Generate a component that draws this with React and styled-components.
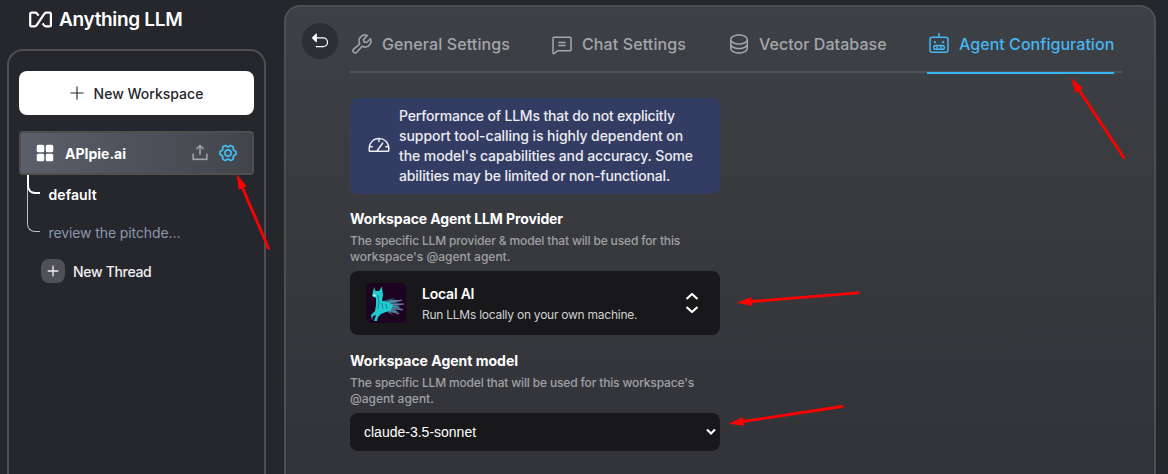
import React from "react";
import styled, { createGlobalStyle } from "styled-components";
import {
  PiSquaresFourFill, PiUploadSimple, PiGearSix, PiWrench, PiChatText,
  PiDatabase, PiRobot, PiArrowUUpLeftFill, PiGauge, PiPlus, PiPlusBold,
} from "react-icons/pi";

const Global = createGlobalStyle`
  * { box-sizing: border-box; }
  html, body { margin: 0; height: 474px; overflow: hidden; background: #25272c; }
  body { font-family: Inter, "Open Sans", sans-serif; color: #fff; }
  svg { display: block; flex: none; }
`;

const Page = styled.div`
  position: relative;
  display: flex;
  width: 1168px;
  height: 474px;
  overflow: hidden;
`;

const Sidebar = styled.aside`
  display: flex;
  flex-direction: column;
  width: 284px;
  padding: 0 18px 0 7px;
`;

const Brand = styled.div`
  display: flex;
  align-items: center;
  gap: 6px;
  flex: none;
  height: 49px;
  padding: 0 0 10px 21px;
  font-size: 19px;
  font-weight: 600;
  white-space: nowrap;
`;

const SidebarPanel = styled.nav`
  height: 500px;
  flex: none;
  padding: 20px 10px;
  border: 2px solid #4f4f50;
  border-radius: 16px;
`;

const NewWorkspace = styled.button`
  display: flex;
  align-items: center;
  justify-content: center;
  gap: 8px;
  width: 235px;
  height: 44px;
  padding: 0 8px 0 6px;
  border: 0;
  border-radius: 8px;
  background: #fff;
  color: #25272c;
  font: 500 14px Inter, sans-serif;
`;

const WorkspaceRow = styled.div`
  display: flex;
  align-items: center;
  width: 235px;
  height: 44px;
  margin-top: 16px;
  padding: 0 14px 0 12px;
  border: 2px solid #4f4f50;
  border-radius: 4px;
  background: linear-gradient(90deg, #5a5f69, #41454b);
  color: #fff;
`;

const WorkspaceName = styled.span`
  flex: 1;
  margin-left: 8px;
  font-size: 14px;
  font-weight: 700;
`;

const RowAction = styled.span`
  margin-left: 8px;
  color: ${(p) => (p.$active ? "#46c8ff" : "#a2a4a7")};

  svg {
    stroke: currentColor;
    stroke-width: 5;
  }
`;

const Threads = styled.div`
  position: relative;
  padding-left: 8px;
`;

const Thread = styled.div`
  display: flex;
  align-items: center;
  height: 38px;
  padding: 0 0 0 21.5px;
  font-size: 14px;
  font-weight: ${(p) => (p.$active ? 600 : 400)};
  color: ${(p) => (p.$active ? "#fff" : "#8b97ac")};
`;

const Branch = styled.i`
  position: absolute;
  left: 8px;
  top: 0;
  width: 13px;
  height: ${(p) => p.$length}px;
  border: solid ${(p) => (p.$active ? "#fff" : "#b9c2d0")};
  border-width: 0 0 ${(p) => (p.$active ? "2px 2px" : "1px 1px")};
  border-bottom-left-radius: 8px;
`;

const NewThread = styled.div`
  display: flex;
  align-items: center;
  gap: 8px;
  height: 40px;
  padding-left: 14px;
  font-size: 14px;
  font-weight: 500;
  color: #f0f0f1;
`;

const PlusTile = styled.span`
  display: grid;
  place-items: center;
  width: 24px;
  height: 24px;
  border-radius: 8px;
  background: #505158;
`;

const Text = styled.span`
  white-space: nowrap;
  letter-spacing: ${(p) => p.$track || 0}px;
`;

const Main = styled.main`
  display: flex;
  align-items: flex-start;
  width: 872px;
  height: 800px;
  flex: none;
  margin-top: 5px;
  padding: 16px 16px;
  border: 2px solid #4f4f50;
  border-radius: 16px;
  background: linear-gradient(180deg, #3d4147 0, #3a3c40 130px, #323338 470px);
`;

const Back = styled.button`
  display: grid;
  place-items: center;
  width: 36px;
  height: 36px;
  margin-right: 12px;
  padding: 0;
  border: 0;
  border-radius: 50%;
  background: #2b2e34;
  color: #fff;
`;

const Content = styled.div`
  width: 772px;
`;

const Tabs = styled.div`
  display: flex;
  gap: 40px;
  height: 50px;
  border-bottom: 2px solid #505257;
`;

const Tab = styled.div`
  display: flex;
  align-items: center;
  gap: 8px;
  flex: none;
  width: ${(p) => p.$width}px;
  height: 51px;
  padding-bottom: 9px;
  font-size: 16px;
  font-weight: 500;
  color: ${(p) => (p.$active ? "#46b6f0" : "#a5a6a9")};
  box-shadow: ${(p) => (p.$active ? "inset 0 -2px #36b5f0" : "none")};
`;

const Form = styled.div`
  display: flex;
  flex-direction: column;
  width: 370px;
  padding-top: 25px;
`;

const Notice = styled.div`
  display: flex;
  align-items: center;
  gap: 8px;
  height: 96px;
  margin-bottom: 15px;
  padding-left: 17px;
  border-radius: 8px;
  background: #333d63;
  color: #ececf2;
`;

const Lines = styled.p`
  display: flex;
  flex-direction: column;
  margin: 0;
  font-size: ${(p) => p.$size}px;
  line-height: ${(p) => p.$line}px;
  font-weight: 500;
`;

const FieldTitle = styled.h3`
  margin: 0 0 4px;
  font-size: 14px;
  line-height: 20px;
  font-weight: 700;
`;

const Hint = styled.div`
  margin-bottom: 6px;
  color: #a0a1a4;
`;

const Provider = styled.div`
  display: flex;
  align-items: center;
  height: 64px;
  margin-bottom: 16px;
  padding: 0 21px 0 16px;
  border-radius: 8px;
  background: #18181a;
`;

const ProviderText = styled.div`
  flex: 1;
  margin-left: 16px;
  padding-top: 2px;
`;

const ProviderName = styled.div`
  font-size: 14px;
  line-height: 20px;
  font-weight: 600;
`;

const ProviderNote = styled.div`
  margin-top: 2px;
  font-size: 12px;
  line-height: 18px;
  color: #d0d0d2;
`;

const ModelSelect = styled.div`
  display: flex;
  align-items: center;
  justify-content: space-between;
  height: 38px;
  padding: 0 4px 0 14px;
  border-radius: 8px;
  background: #18181a;
  font: 14px "Liberation Sans", Arial, sans-serif;
`;

const Overlay = styled.svg`
  position: absolute;
  left: 0;
  top: 0;
  pointer-events: none;
`;

function Arrow({ tip, tail }) {
  const dx = tail[0] - tip[0];
  const dy = tail[1] - tip[1];
  const len = Math.hypot(dx, dy);
  const ux = dx / len;
  const uy = dy / len;
  const bx = tip[0] + ux * 15;
  const by = tip[1] + uy * 15;
  return (
    <g>
      <line x1={bx} y1={by} x2={tail[0]} y2={tail[1]} stroke="#f00" strokeWidth="2.8" strokeLinecap="round" />
      <polygon
        fill="#f00"
        points={`${tip[0]},${tip[1]} ${bx - uy * 4.4},${by + ux * 4.4} ${bx + uy * 4.4},${by - ux * 4.4}`}
      />
    </g>
  );
}

const LogoMark = () => (
  <svg width="25" height="18" viewBox="0 0 25 18" fill="none" stroke="#fff" strokeWidth="2.200" strokeLinejoin="round">
    <path d="M10.600 4.700 9 2.600Q8.300 1.700 7.100 1.700H3.600Q2.200 1.700 2.200 3.100V13.900Q2.200 15.300 3.600 15.300H6.600Q7.800 15.300 8.600 14.300L16.400 2.700Q17.200 1.700 18.400 1.700H21.500Q22.900 1.700 22.900 3.100V13.900Q22.900 15.300 21.500 15.300H18Q16.800 15.300 16.100 14.400L14.600 12.400" />
  </svg>
);

const Llama = () => (
  <svg width="40" height="40" viewBox="0 0 40 40">
    <rect width="40" height="40" rx="5" fill="#1c0420" />
    <path d="M17 18 28 15 26 17 37 17 30 20 39 21 31 23 38 27 29 26 34 31 24 28 27 32 19 28Z" fill="#2d7f99" opacity=".8" />
    <path d="M20 20 36 17M22 22 38 21M22 25 37 27M23 28 33 31" stroke="#a878a4" strokeWidth=".8" />
    <path d="M19 20 30 17M20 23 33 24M21 26 30 29" stroke="#5eb0bd" strokeWidth=".8" />
    <path d="M8 4 9.500 8 13 8 16 3.500 16.500 9 17 12 16 18 22 19 27 22 25 27 20 29 15 31 12 34 11 38 8 38 10 32 7 33 6 37 5 32 9 28 10 22 10 15 6 13 7 9Z" fill="#20cbd0" />
    <path d="M12 12 13 20 12 26M16 20 17 26M20 21 21 26" stroke="#0d8b99" strokeWidth="1" fill="none" />
    <circle cx="8.500" cy="12.500" r="1.300" fill="#bff0ec" />
  </svg>
);

const Chevrons = () => (
  <svg width="14" height="22" viewBox="0 0 14 22" fill="none" stroke="#fff" strokeWidth="2.200" strokeLinejoin="round">
    <path d="M1.500 7 7 2 12.500 7M1.500 15 7 20 12.500 15" />
  </svg>
);

const tabs = [
  { label: "General Settings", Icon: PiWrench, width: 160, track: 0.11 },
  { label: "Chat Settings", Icon: PiChatText, width: 137, track: 0.12 },
  { label: "Vector Database", Icon: PiDatabase, width: 160, track: 0.05 },
  { label: "Agent Configuration", Icon: PiRobot, width: 187, track: 0.04, active: true },
];

export default function App() {
  return (
    <Page>
      <Global />
      <Sidebar>
        <Brand><LogoMark /><Text $track={-0.33}>Anything LLM</Text></Brand>
        <SidebarPanel>
          <NewWorkspace><PiPlus size={18} /><Text>New Workspace</Text></NewWorkspace>
          <WorkspaceRow>
            <PiSquaresFourFill size={24} />
            <WorkspaceName><Text>APIpie.ai</Text></WorkspaceName>
            <RowAction><PiUploadSimple size={20} /></RowAction>
            <RowAction $active><PiGearSix size={20} /></RowAction>
          </WorkspaceRow>
          <Threads>
            <Branch $length={57} />
            <Branch $length={19} $active />
            <Thread $active><Text $track={0.08}>default</Text></Thread>
            <Thread><Text $track={-0.1}>review the pitchde…</Text></Thread>
            <NewThread><PlusTile><PiPlusBold size={14} /></PlusTile><Text $track={-0.32}>New Thread</Text></NewThread>
          </Threads>
        </SidebarPanel>
      </Sidebar>
      <Main>
        <Back><PiArrowUUpLeftFill size={20} /></Back>
        <Content>
          <Tabs>
            {tabs.map(({ label, Icon, width, active, track }) => (
              <Tab key={label} $width={width} $active={active}>
                <Icon size={24} /><Text $track={track}>{label}</Text>
              </Tab>
            ))}
          </Tabs>
          <Form>
            <Notice>
              <PiGauge size={24} />
              <Lines $size={14} $line={20}>
                <Text $track={-0.18}>Performance of LLMs that do not explicitly</Text>
                <Text $track={-0.07}>support tool-calling is highly dependent on</Text>
                <Text $track={-0.09}>the model's capabilities and accuracy. Some</Text>
                <Text $track={-0.12}>abilities may be limited or non-functional.</Text>
              </Lines>
            </Notice>
            <FieldTitle><Text $track={-0.1}>Workspace Agent LLM Provider</Text></FieldTitle>
            <Hint>
              <Lines $size={12} $line={16}>
                <Text $track={-0.15}>The specific LLM provider &amp; model that will be used for this</Text>
                <Text>workspace's @agent agent.</Text>
              </Lines>
            </Hint>
            <Provider>
              <Llama />
              <ProviderText>
                <ProviderName><Text $track={-0.22}>Local AI</Text></ProviderName>
                <ProviderNote><Text $track={-0.25}>Run LLMs locally on your own machine.</Text></ProviderNote>
              </ProviderText>
              <Chevrons />
            </Provider>
            <FieldTitle><Text>Workspace Agent model</Text></FieldTitle>
            <Hint>
              <Lines $size={12} $line={16}>
                <Text $track={-0.155}>The specific LLM model that will be used for this workspace's</Text>
                <Text>@agent agent.</Text>
              </Lines>
            </Hint>
            <ModelSelect>
              <Text>claude-3.5-sonnet</Text>
              <svg width="10" height="8" viewBox="0 0 10 8" fill="none" stroke="#fff" strokeWidth="2"><path d="M1 1.500 5 5.500 9 1.500" /></svg>
            </ModelSelect>
          </Form>
        </Content>
      </Main>
      <Overlay width="1168" height="474">
        <Arrow tip={[236.7, 174.3]} tail={[268.5, 248.3]} />
        <Arrow tip={[1071, 78]} tail={[1123.8, 157.5]} />
        <Arrow tip={[736.7, 302.7]} tail={[858, 292.8]} />
        <Arrow tip={[728.7, 423.7]} tail={[842, 406.5]} />
      </Overlay>
    </Page>
  );
}
